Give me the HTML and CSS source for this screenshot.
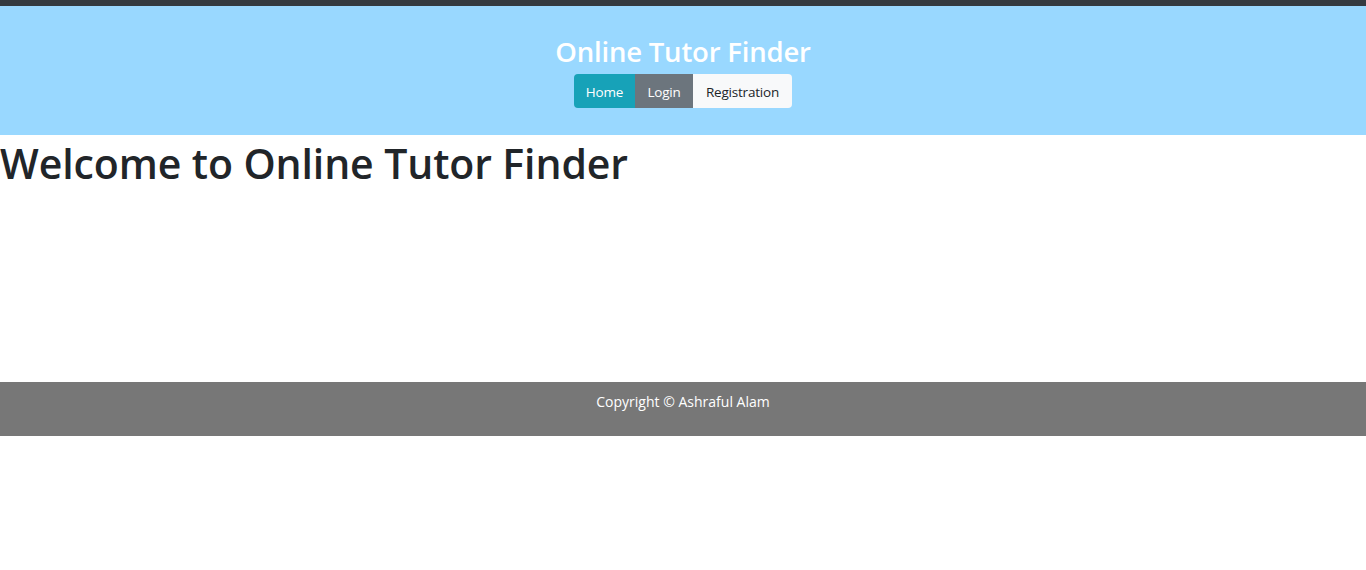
FILE: index.html
```html
<!DOCTYPE html>
<html lang="en">
<head>
<meta charset="utf-8">
<title>Online Tutor Finder</title>
<link rel="stylesheet" href="styles.css">
</head>
<body>
<div class="topbar"></div>
<header class="header">
  <h3 class="brand">Online Tutor Finder</h3>
  <nav class="btn-group">
    <a class="btn btn-info" href="#">Home</a>
    <a class="btn btn-secondary" href="#">Login</a>
    <a class="btn btn-light" href="#">Registration</a>
  </nav>
</header>
<main class="main">
  <h1 class="welcome">Welcome to Online Tutor Finder</h1>
</main>
<footer class="footer">
  <p class="copy">Copyright © Ashraful Alam</p>
</footer>
</body>
</html>
```
FILE: styles.css
```css
html, body {
  margin: 0;
  padding: 0;
  background: #fff;
  font-family: "Open Sans", "Noto Sans", sans-serif;
  color: #212529;
}
.topbar {
  height: 6px;
  background: #343a40;
}
.header {
  height: 129px;
  background: #99d8ff;
  display: flex;
  flex-direction: column;
  align-items: center;
  box-sizing: border-box;
  padding-top: 29px;
}
.brand {
  margin: 0;
  color: #fff;
  font-size: 27.5px;
  font-weight: 600;
  line-height: 34px;
  letter-spacing: -0.2px;
}
.btn-group {
  display: flex;
  margin-top: 5px;
  border-radius: 4px;
  overflow: hidden;
}
.btn {
  display: flex;
  align-items: center;
  justify-content: center;
  height: 34px;
  padding-top: 1px;
  box-sizing: border-box;
  font-size: 13.5px;
  text-decoration: none;
  letter-spacing: -0.2px;
}
.btn-info { background: #17a2b8; color: #fff; width: 61px; }
.btn-secondary { background: #6c757d; color: #fff; width: 58px; }
.btn-light { background: #f8f9fa; color: #212529; width: 99px; }
.main {
  height: 247px;
}
.welcome {
  margin: 0;
  font-size: 41px;
  font-weight: 600;
  line-height: 56px;
  letter-spacing: -0.1px;
}
.footer {
  height: 54px;
  background: #777777;
  display: flex;
  justify-content: center;
  box-sizing: border-box;
  padding-top: 10px;
}
.copy {
  margin: 0;
  color: #fff;
  font-size: 14px;
  line-height: 20px;
  letter-spacing: 0;
}
```
